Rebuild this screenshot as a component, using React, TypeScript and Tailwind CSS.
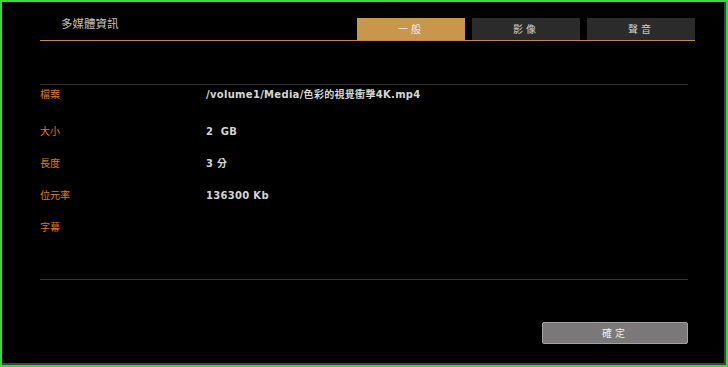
export default function App() {
	const rows = [
		{ label: "檔案", value: "/volume1/Media/色彩的視覺衝擊4K.mp4", mt: "mt-0" },
		{ label: "大小", value: "2  GB", mt: "mt-[19px]" },
		{ label: "長度", value: "3 分", mt: "mt-[14px]" },
		{ label: "位元率", value: "136300 Kb", mt: "mt-[14px]" },
		{ label: "字幕", value: "", mt: "mt-[14px]" },
	];
	const tabs = ["一般", "影像", "聲音"];

	return (
		<div className="w-[728px] h-[367px] border-2 border-[#2fe02f] bg-black font-['DejaVu_Sans','Noto_Sans_CJK_TC',sans-serif]">
			<div className="h-full border-r-2 border-b-2 border-[#3a4250] pl-[38px] pt-[16px] flex flex-col">
				{/* Header: title + tabs */}
				<div className="w-[655px] h-[23px] flex border-b border-[#c8893b]">
					<span className="pl-[21px] self-start text-[11.5px] leading-[14px] -mt-px text-[#c4c4c4]">
						多媒體資訊
					</span>
					<div className="ml-auto flex gap-[7px]">
						{tabs.map((t, i) => (
							<div
								key={t}
								className={
									i === 0
										? "w-[108px] h-[22px] flex items-center justify-center bg-[#c9974c] text-[10px] tracking-[3px] text-[#ececec]"
										: "w-[108px] h-[22px] flex items-center justify-center bg-[#2b2b2b] text-[10px] tracking-[3px] text-[#cfcfcf]"
								}
							>
								{t}
							</div>
						))}
					</div>
				</div>

				{/* Info rows */}
				<div className="w-[648px] mt-[43px] border-t border-[#333333]">
					{rows.map((r) => (
						<div key={r.label} className={`flex items-center h-[18px] ${r.mt}`}>
							<span className="w-[166px] text-[10px] text-[#e07a14]">{r.label}</span>
							<span className="text-[10px] tracking-[0.3px] font-bold text-[#d6d6d6] whitespace-pre">{r.value}</span>
						</div>
					))}
				</div>

				<div className="w-[648px] mt-[43px] border-t border-[#333333]"></div>

				{/* Footer */}
				<div className="w-[648px] mt-[42px] flex justify-end">
					<button className="w-[146px] h-[22px] rounded-[2px] border border-[#a3a3a3] bg-[#7a7878] text-[10px] tracking-[3px] text-[#f0f0f0]">
						確定
					</button>
				</div>
			</div>
		</div>
	);
}
